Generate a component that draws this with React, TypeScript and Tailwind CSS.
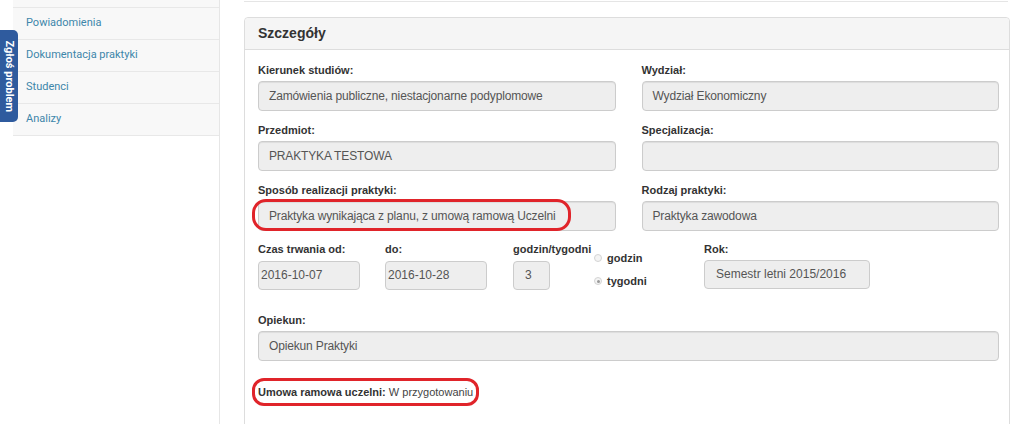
import React from 'react';

const Field = ({ label, value, className = '' }: { label: string; value: string; className?: string }) => (
  <div className={className}>
    <div className="text-[11px] font-bold text-[#333] leading-[16px] mb-[3px]">{label}</div>
    <div className="h-[30px] rounded-[4px] border border-[#ccc] bg-[#eee] px-[10px] text-[12px] tracking-[-0.15px] leading-[28px] text-[#555] shadow-[inset_0_1px_1px_rgba(0,0,0,0.075)]">
      {value}
    </div>
  </div>
);

const Radio = ({ label, checked }: { label: string; checked?: boolean }) => (
  <div className="flex items-center gap-[5px] text-[11px] leading-[16px] font-bold text-[#333]">
    <span className="w-[8px] h-[8px] rounded-full border border-[#d4d4d4] bg-[#f4f4f4] flex items-center justify-center">
      {checked && <span className="w-[3px] h-[3px] rounded-full bg-[#999]" />}
    </span>
    {label}
  </div>
);

const App = () => {
  const menu = ['Powiadomienia', 'Dokumentacja praktyki', 'Studenci', 'Analizy'];

  return (
    <div
      className="relative w-[1024px] h-[424px] overflow-hidden bg-white flex"
      style={{ fontFamily: '"Liberation Sans", Arial, sans-serif' }}
    >
      {/* sidebar */}
      <div className="w-[220px] shrink-0 pl-[13px] border-r border-[#e6e6e6]">
        <div className="h-[8px] bg-[#f8f8f8] border-b border-[#e8e8e8]" />
        {menu.map((m) => (
          <div
            key={m}
            className="h-[32px] bg-[#f8f8f8] border-b border-[#e8e8e8] pl-[13px] flex items-center text-[11px] text-[#3d86aa]"
            style={{ fontFamily: 'Roboto, "Liberation Sans", sans-serif' }}
          >
            {m}
          </div>
        ))}
      </div>

      {/* "Zgłoś problem" tab */}
      <div className="absolute left-0 top-[30px] w-[18px] h-[92px] rounded-r-[5px] bg-[#2f5b9e] flex items-center justify-center">
        <span className="rotate-90 whitespace-nowrap text-[11px] font-bold text-white" style={{ fontFamily: 'Roboto, sans-serif' }}>
          Zgłoś problem
        </span>
      </div>

      {/* main */}
      <div className="flex-1 pl-[24px] pr-[14px]">
        <div className="h-[2px] border-b border-[#e5e5e5] mr-[2px]" />
        <div className="mt-[15px] border border-[#ddd] rounded-[4px] h-[420px]">
          <div className="h-[32px] bg-[#f5f5f5] border-b border-[#ddd] rounded-t-[4px] px-[13px] flex items-center text-[14px] font-bold text-[#333]">
            Szczegóły
          </div>
          <div className="pl-[13px] pr-[10px] pt-[12px]">
            <div className="grid grid-cols-2 gap-x-[26px] gap-y-[11px]">
              <Field label="Kierunek studiów:" value="Zamówienia publiczne, niestacjonarne podyplomowe" />
              <Field label="Wydział:" value="Wydział Ekonomiczny" />
              <Field label="Przedmiot:" value="PRAKTYKA TESTOWA" />
              <Field label="Specjalizacja:" value="" />
              <div className="relative">
                <Field label="Sposób realizacji praktyki:" value="Praktyka wynikająca z planu, z umową ramową Uczelni" />
                <div className="absolute left-[-6px] top-[17px] w-[319px] h-[32px] rounded-[14px] border-[3px] border-[#e0242a]" />
              </div>
              <Field label="Rodzaj praktyki:" value="Praktyka zawodowa" />
            </div>

            <div className="flex mt-[10px]">
              <div className="w-[127px]">
                <div className="text-[11px] font-bold text-[#333] leading-[16px] mb-[4px]">Czas trwania od:</div>
                <div className="w-[102px] h-[29px] rounded-[4px] border border-[#ccc] bg-[#eee] px-[2px] text-[12px] leading-[27px] text-[#555]">2016-10-07</div>
              </div>
              <div className="w-[128px]">
                <div className="text-[11px] font-bold text-[#333] leading-[16px] mb-[4px]">do:</div>
                <div className="w-[102px] h-[29px] rounded-[4px] border border-[#ccc] bg-[#eee] px-[2px] text-[12px] leading-[27px] text-[#555]">2016-10-28</div>
              </div>
              <div className="w-[81px]">
                <div className="text-[11px] font-bold text-[#333] leading-[16px] mb-[4px]">godzin/tygodni</div>
                <div className="w-[37px] h-[29px] rounded-[4px] border border-[#ccc] bg-[#eee] px-[11px] text-[12px] leading-[27px] text-[#555]">3</div>
              </div>
              <div className="w-[110px] pt-[9px] flex flex-col gap-[7px]">
                <Radio label="godzin" />
                <Radio label="tygodni" checked />
              </div>
              <div>
                <div className="text-[11px] font-bold text-[#333] leading-[16px] mb-[3px]">Rok:</div>
                <div className="w-[166px] h-[29px] rounded-[4px] border border-[#ccc] bg-[#eee] px-[11px] text-[12px] leading-[27px] text-[#555]">Semestr letni 2015/2016</div>
              </div>
            </div>

            <Field className="mt-[22px]" label="Opiekun:" value="Opiekun Praktyki" />

            <div className="relative mt-[23px] text-[11px] text-[#333] leading-[16px]">
              <span className="font-bold">Umowa ramowa uczelni:</span> <span className="text-[#444]">W przygotowaniu</span>
              <div className="absolute left-[-6px] top-[-6px] w-[227px] h-[28px] rounded-[12px] border-[3px] border-[#e0242a]" />
            </div>
          </div>
        </div>
      </div>
    </div>
  );
};

export default App;
